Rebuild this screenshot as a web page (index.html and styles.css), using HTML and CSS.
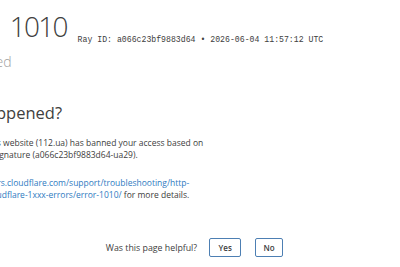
FILE: index.html
```html
<!DOCTYPE html>
<html>
<head>
<meta charset="utf-8">
<link rel="stylesheet" href="styles.css">
</head>
<body>
<div class="page">
  <header class="header">
    <h1 class="title"><span class="err">Error</span> <span class="code">1010</span><span class="ray">Ray ID: a066c23bf9883d64 &bull; 2026-06-04 11:57:12 UTC</span></h1>
    <h2 class="sub">Access denied</h2>
  </header>
  <section class="what">
    <h2 class="what-title">What happened?</h2>
    <p class="text">The owner of this website (112.ua) has banned your access based on your browser's signature (a066c23bf9883d64-ua29).</p>
    <p class="text"><a class="link" href="#">https://developers.cloudflare.com/support/troubleshooting/http-status-codes/cloudflare-1xxx-errors/error-1010/</a> for more details.</p>
  </section>
  <div class="feedback">
    <span class="question">Was this page helpful?</span>
    <button class="btn btn-yes">Yes</button>
    <button class="btn">No</button>
  </div>
</div>
</body>
</html>
```

FILE: styles.css
```css
html, body {
  margin: 0;
  padding: 0;
  background: #fff;
  overflow: hidden;
}
body {
  font-family: "Open Sans", "Noto Sans", sans-serif;
  color: #404040;
  width: 400px;
  height: 267px;
}
.page {
  padding-top: 8px;
}
.header {
  margin-left: -66px;
}
.title {
  margin: 0;
  font-weight: 300;
  font-size: 28px;
  line-height: 36px;
  white-space: nowrap;
}
.err {
  margin-right: 4px;
}
.code {
  letter-spacing: -1.8px;
}
.ray {
  display: inline-block;
  vertical-align: -5px;
  font-family: "Liberation Mono", monospace;
  font-size: 8.2px;
  font-weight: 400;
  color: #404040;
  margin-left: 11px;
}
.sub {
  margin: -6px 0 0 -12px;
  font-weight: 300;
  font-size: 14px;
  line-height: 20px;
  color: #a0a0a0;
  white-space: nowrap;
}
.what {
  margin-left: -68px;
  margin-top: 30px;
  width: 274px;
}
.what-title {
  margin: 0 0 13px;
  font-weight: 400;
  font-size: 16.5px;
  line-height: 22px;
  white-space: nowrap;
}
.text {
  margin: 0 0 16px;
  font-size: 8.5px;
  line-height: 12px;
}
.link {
  color: #2f7bbf;
  text-decoration: none;
}
.feedback {
  display: flex;
  align-items: center;
  justify-content: center;
  margin-top: 37px;
  padding-right: 11px;
}
.question {
  font-size: 8.8px;
  color: #404040;
  margin-right: 12px;
}
.btn {
  font-family: inherit;
  font-size: 8px;
  font-weight: 600;
  color: #404040;
  background: #fff;
  border: 1px solid #4d7fb3;
  border-radius: 2px;
  height: 19px;
  padding: 0;
}
.btn-yes {
  width: 32px;
  margin-right: 14px;
}
.btn + .btn {
  width: 28px;
}
```
